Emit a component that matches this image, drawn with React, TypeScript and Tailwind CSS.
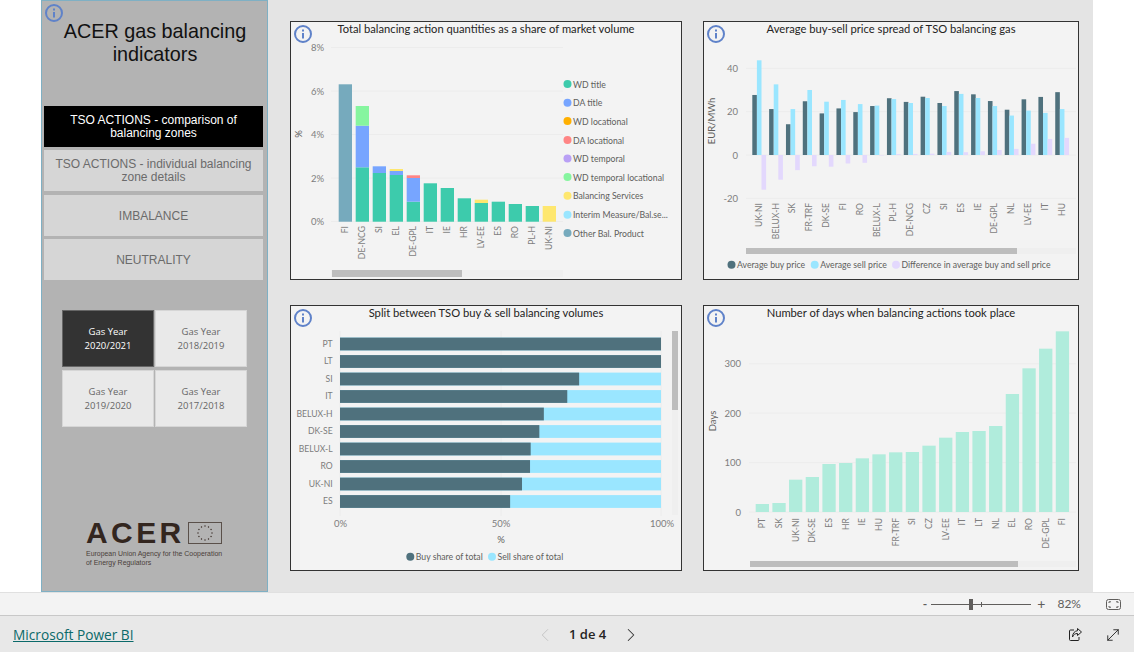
import { ChevronLeft, ChevronRight, MoveDiagonal } from "lucide-react";
import type { ReactNode } from "react";

const TICK = "text-[9.5px] fill-[#7d7d7d]";
const CATEGORY = "text-[8.6px] fill-[#7d7d7d]";
const LEGEND = "text-[8.7px] fill-[#605e5c]";
const GRID = "#ececec";

const BUY = "#4f717d";
const SELL = "#9ae6ff";
const DIFF = "#e3d8fd";

function InfoIcon() {
  return (
    <svg width="20" height="20" viewBox="0 0 20 20" className="block">
      <circle cx="10" cy="10" r="8" fill="none" stroke="#5f82c9" strokeWidth="2" />
      <rect x="9" y="9" width="2" height="5.5" fill="#5f82c9" />
      <rect x="9" y="5.5" width="2" height="2" fill="#5f82c9" />
    </svg>
  );
}

function Card({
  title,
  box,
  children,
}: {
  title: string;
  box: [number, number, number, number];
  children: ReactNode;
}) {
  return (
    <div className="relative flex flex-col border border-[#333] bg-[#f3f3f3]">
      <div className="h-[16px] text-center text-[11.2px] leading-[14px] text-[#252423]">{title}</div>
      <svg
        width={box[2]}
        height={box[3]}
        viewBox={box.join(" ")}
        className="block font-['Lato',sans-serif]"
      >
        {children}
      </svg>
      <div className="absolute left-[2px] top-[2px]">
        <InfoIcon />
      </div>
    </div>
  );
}

function XLabel({ x, y, text }: { x: number; y: number; text: string }) {
  return (
    <text
      x={x}
      y={y}
      transform={`rotate(-90 ${x} ${y})`}
      textAnchor="end"
      dominantBaseline="central"
      className={CATEGORY}
    >
      {text}
    </text>
  );
}

function YTitle({ x, y, text }: { x: number; y: number; text: string }) {
  return (
    <text
      x={x}
      y={y}
      transform={`rotate(-90 ${x} ${y})`}
      textAnchor="middle"
      dominantBaseline="central"
      className="text-[9.5px] fill-[#605e5c]"
    >
      {text}
    </text>
  );
}

function LegendItem({ x, y, color, text }: { x: number; y: number; color: string; text: string }) {
  return (
    <g>
      <circle cx={x} cy={y} r="4" fill={color} />
      <text x={x + 5.5} y={y} dominantBaseline="central" className={LEGEND}>
        {text}
      </text>
    </g>
  );
}

function Tick({ x, y, text, className = TICK }: { x: number; y: number; text: string; className?: string }) {
  return (
    <text x={x} y={y} textAnchor="end" dominantBaseline="central" className={className}>
      {text}
    </text>
  );
}

// stacks are [top y, colour] from the bottom up, read off the picture
const shareBars: [string, [number, string][]][] = [
  ["FI", [[84.3, "#76aabd"]]],
  ["DE-NCG", [[167.3, "#3dcbac"], [125.7, "#77a5ff"], [106, "#86f59f"]]],
  ["SI", [[173, "#3dcbac"], [166.3, "#77a5ff"]]],
  ["EL", [[175, "#3dcbac"], [171, "#77a5ff"], [169, "#fee76f"]]],
  ["DE-GPL", [[201.7, "#3dcbac"], [178, "#77a5ff"], [175.3, "#ff8585"]]],
  ["IT", [[183.3, "#3dcbac"]]],
  ["IE", [[188, "#3dcbac"]]],
  ["HR", [[198.3, "#3dcbac"]]],
  ["LV-EE", [[203, "#3dcbac"], [199.7, "#fee76f"]]],
  ["ES", [[201.7, "#3dcbac"]]],
  ["RO", [[204, "#3dcbac"]]],
  ["PL-H", [[206, "#3dcbac"]]],
  ["UK-NI", [[206, "#fee76f"]]],
];

const shareLegend: [string, string, number][] = [
  ["WD title", "#3dcbac", 84],
  ["DA title", "#77a5ff", 102.7],
  ["WD locational", "#ffb000", 121],
  ["DA locational", "#ff8585", 140],
  ["WD temporal", "#b9a0f5", 158.5],
  ["WD temporal locational", "#86f59f", 177],
  ["Balancing Services", "#fee76f", 195.7],
  ["Interim Measure/Bal.se...", "#9ae6ff", 214.7],
  ["Other Bal. Product", "#76aabd", 233],
];

function ShareChart() {
  return (
    <Card title="Total balancing action quantities as a share of market volume" box={[291, 38, 390, 241]}>
      {[47.5, 91, 134.5, 178, 221.5].map((y, i) => (
        <g key={y}>
          <line x1="331" x2="563" y1={y} y2={y} stroke={GRID} />
          <Tick x={324} y={y} text={`${8 - i * 2}%`} />
        </g>
      ))}
      <YTitle x={298} y={134} text="%" />
      {shareBars.map(([name, stack], i) => {
        const x = 338.7 + i * 17;
        let bottom = 221.7;
        return (
          <g key={name}>
            {stack.map(([top, color]) => {
              const h = bottom - top;
              const y = top;
              bottom = top;
              return <rect key={color} x={x} y={y} width="13.3" height={h} fill={color} />;
            })}
            <XLabel x={x + 6.6} y={226} text={name} />
          </g>
        );
      })}
      {shareLegend.map(([text, color, y]) => (
        <LegendItem key={text} x={567.5} y={y} color={color} text={text} />
      ))}
      <rect x="331" y="270" width="232" height="7" fill="#efefef" />
      <rect x="332" y="270" width="130" height="7" fill="#bdbdbd" />
    </Card>
  );
}

const spread: [string, number, number, number][] = [
  ["UK-NI", 27.7, 43.7, -16],
  ["BELUX-H", 21.2, 32.6, -11.4],
  ["SK", 14.2, 21.2, -7],
  ["FR-TRF", 24.8, 30, -5.2],
  ["DK-SE", 19.2, 24.6, -5.4],
  ["FI", 21.5, 25.4, -3.9],
  ["RO", 19.8, 23.5, -3.6],
  ["BELUX-L", 22.6, 22.8, -0.2],
  ["PL-H", 26.2, 25.8, 0.4],
  ["DE-NCG", 24.5, 24, 0.5],
  ["CZ", 26.9, 26.3, 0.6],
  ["SI", 24, 22.6, 1.4],
  ["ES", 29.5, 28.2, 1.3],
  ["IE", 28, 26.3, 1.7],
  ["DE-GPL", 24.9, 22.6, 2.3],
  ["NL", 20.9, 18.2, 2.8],
  ["LV-EE", 25.7, 20.5, 5.2],
  ["IT", 26.8, 19.4, 7.4],
  ["HU", 29, 21.2, 7.9],
];

function SpreadBar({ x, value, color }: { x: number; value: number; color: string }) {
  const h = Math.abs(value) * 2.167;
  return <rect x={x} y={value > 0 ? 155 - h : 155} width="4.6" height={h} fill={color} />;
}

function SpreadChart() {
  return (
    <Card title="Average buy-sell price spread of TSO balancing gas" box={[704, 38, 374, 241]}>
      {[40, 20, 0, -20].map((v) => (
        <g key={v}>
          <line x1="746" x2="1076" y1={155 - v * 2.167} y2={155 - v * 2.167} stroke={GRID} />
          <Tick x={738} y={155 - v * 2.167} text={String(v)} />
        </g>
      ))}
      <YTitle x={711} y={121} text="EUR/MWh" />
      {spread.map(([name, buy, sell, diff], i) => {
        const x = 752.3 + i * 16.83;
        return (
          <g key={name}>
            <SpreadBar x={x} value={buy} color={BUY} />
            <SpreadBar x={x + 4.6} value={sell} color={SELL} />
            <SpreadBar x={x + 9.2} value={diff} color={DIFF} />
            <XLabel x={x + 6.5} y={203} text={name} />
          </g>
        );
      })}
      <rect x="746" y="248" width="330" height="6" fill="#efefef" />
      <rect x="746" y="248" width="271" height="6" fill="#bdbdbd" />
      <LegendItem x={731.5} y={264.7} color={BUY} text="Average buy price" />
      <LegendItem x={814.7} y={264.7} color={SELL} text="Average sell price" />
      <LegendItem x={896} y={264.7} color={DIFF} text="Difference in average buy and sell price" />
    </Card>
  );
}

const split: [string, number][] = [
  ["PT", 100],
  ["LT", 100],
  ["SI", 74.5],
  ["IT", 70.8],
  ["BELUX-H", 63.5],
  ["DK-SE", 62.1],
  ["BELUX-L", 59.4],
  ["RO", 59.2],
  ["UK-NI", 56.7],
  ["ES", 53],
];

function SplitChart() {
  return (
    <Card title="Split between TSO buy & sell balancing volumes" box={[291, 322, 390, 248]}>
      {[340, 501, 661].map((x) => (
        <line key={x} x1={x} x2={x} y1="331" y2="516" stroke={GRID} />
      ))}
      {split.map(([name, buy], i) => {
        const y = 337.6 + i * 17.5;
        return (
          <g key={name}>
            <rect x="340" y={y} width="321" height="12.8" fill={SELL} />
            <rect x="340" y={y} width={(321 * buy) / 100} height="12.8" fill={BUY} />
            <Tick x={332.7} y={y + 6} text={name} className={CATEGORY} />
          </g>
        );
      })}
      <rect x="672" y="331" width="6" height="184" fill="#efefef" />
      <rect x="672" y="331" width="6" height="79" fill="#bdbdbd" />
      {(
        [
          [340.5, "0%"],
          [501, "50%"],
          [662, "100%"],
        ] as [number, string][]
      ).map(([x, text]) => (
        <text key={text} x={x} y={523.7} textAnchor="middle" dominantBaseline="central" className={TICK}>
          {text}
        </text>
      ))}
      <text x={501} y={539.7} textAnchor="middle" dominantBaseline="central" className="text-[9.5px] fill-[#605e5c]">
        %
      </text>
      <LegendItem x={410.3} y={556.7} color={BUY} text="Buy share of total" />
      <LegendItem x={492} y={556.7} color={SELL} text="Sell share of total" />
    </Card>
  );
}

const days: [string, number][] = [
  ["PT", 24],
  ["SK", 27],
  ["UK-NI", 97],
  ["DK-SE", 105],
  ["ES", 144],
  ["HR", 147],
  ["IE", 161],
  ["HU", 173],
  ["FR-TRF", 179],
  ["SI", 180],
  ["CZ", 199],
  ["LV-EE", 223],
  ["IT", 240],
  ["LT", 243],
  ["NL", 258],
  ["EL", 354],
  ["RO", 431],
  ["DE-GPL", 490],
  ["FI", 542],
];

function DaysChart() {
  return (
    <Card title="Number of days when balancing actions took place" box={[704, 322, 374, 248]}>
      {[300, 200, 100, 0].map((v) => (
        <g key={v}>
          <line x1="749" x2="1076" y1={512 - v * 0.4943} y2={512 - v * 0.4943} stroke={GRID} />
          <Tick x={741} y={512 - v * 0.4943} text={String(v)} />
        </g>
      ))}
      <YTitle x={712.5} y={421} text="Days" />
      {days.map(([name, h], i) => {
        const x = 755.7 + i * 16.67;
        return (
          <g key={name}>
            <rect x={x} y={512 - h / 3} width="13.3" height={h / 3} fill="#b0ecdc" />
            <XLabel x={x + 6.6} y={518} text={name} />
          </g>
        );
      })}
      <rect x="750" y="561" width="326" height="6" fill="#efefef" />
      <rect x="750" y="561" width="268" height="6" fill="#bdbdbd" />
    </Card>
  );
}

function NavButton({ children, active }: { children: ReactNode; active?: boolean }) {
  return (
    <div
      className={`flex h-[41px] items-center justify-center px-2 text-center text-[12px] leading-[13px] ${
        active ? "bg-black text-white" : "bg-[#d6d6d6] text-[#6b6b6b]"
      }`}
    >
      <span>{children}</span>
    </div>
  );
}

function YearTile({ line, active }: { line: string; active?: boolean }) {
  return (
    <div
      className={`flex h-[57px] flex-col items-center justify-center border pt-[1px] text-[9.5px] leading-[14px] font-['Open_Sans',sans-serif] ${
        active ? "border-[#666] bg-[#333] text-white" : "border-[#d6d6d6] bg-[#e9e9e9] text-[#666]"
      }`}
    >
      <span>Gas Year</span>
      <span>{line}</span>
    </div>
  );
}

const stars = Array.from({ length: 12 }, (_, i) => {
  const a = (i * Math.PI) / 6;
  return [205 + Math.sin(a) * 7, 532.5 - Math.cos(a) * 7];
});

function AcerLogo() {
  return (
    <div className="ml-[44px] mt-[95px] w-[140px] text-[#33261f]">
      <div className="flex h-[22px] items-center">
        <span className="w-[102px] text-[30px] font-bold leading-[22px] tracking-[3.4px] font-['Liberation_Sans',sans-serif]">
          ACER
        </span>
        <svg width="34" height="22" viewBox="188 521.5 34 22" className="block">
          <rect x="188.5" y="522" width="33" height="21" fill="none" stroke="#5a504a" />
          {stars.map(([x, y]) => (
            <circle key={`${x}-${y}`} cx={x} cy={y} r="0.7" fill="#33261f" />
          ))}
        </svg>
      </div>
      <div className="mt-[5px] whitespace-nowrap text-[6.95px] leading-[9px] font-['Liberation_Sans',sans-serif] text-[#4a403a]">
        <div>European Union Agency for the Cooperation</div>
        <div>of Energy Regulators</div>
      </div>
    </div>
  );
}

function Sidebar() {
  return (
    <aside className="relative h-full w-[227px] border border-[#7fb0c4] bg-[#b3b3b3] font-['Liberation_Sans',sans-serif]">
      <div className="absolute left-[2px] top-[2px]">
        <InfoIcon />
      </div>
      <h1 className="pt-[19px] pl-[1px] text-center text-[19.8px] font-normal leading-[23px] text-[#111]">
        ACER gas balancing
        <br />
        indicators
      </h1>
      <div className="mt-[40px] ml-[2px] mr-[4px] flex flex-col gap-[3px]">
        <NavButton active>
          TSO ACTIONS - comparison of
          <br />
          balancing zones
        </NavButton>
        <NavButton>
          TSO ACTIONS - individual balancing
          <br />
          zone details
        </NavButton>
        <div className="mt-[1px]">
          <NavButton>
            <span className="relative top-[1px]">IMBALANCE</span>
          </NavButton>
        </div>
        <NavButton>
          <span className="relative top-[1px]">NEUTRALITY</span>
        </NavButton>
      </div>
      <div className="ml-[20px] mt-[30px] grid w-[185px] grid-cols-2 gap-x-[1px] gap-y-[3px]">
        <YearTile line="2020/2021" active />
        <YearTile line="2018/2019" />
        <YearTile line="2019/2020" />
        <YearTile line="2017/2018" />
      </div>
      <AcerLogo />
    </aside>
  );
}

function ZoomBar() {
  return (
    <div className="flex h-[24px] items-center justify-end border-y border-y-[#e0e0e0] border-b-[#c8c8c8] bg-[#f3f3f3] text-[#605e5c]">
      <span className="mr-[4px] text-[12px] font-bold leading-none">-</span>
      <div className="relative mr-[6px] h-[1px] w-[100px] bg-[#605e5c]">
        <div className="absolute left-[38px] top-[-5px] h-[11px] w-[4px] bg-[#605e5c]" />
        <div className="absolute left-[50px] top-[-2px] h-[5px] w-[1px] bg-[#605e5c]" />
      </div>
      <span className="mr-[12px] text-[14px] leading-none">+</span>
      <span className="mr-[25px] text-[12px]">82%</span>
      <svg width="15" height="11" viewBox="0 0 15 11" fill="none" stroke="#605e5c" className="mr-[13px] block">
        <rect x="0.5" y="0.5" width="14" height="10" rx="2" />
        <path d="M3 4V2.8H5M10 2.8h2V4M12 7v1.2h-2M5 8.2H3V7" />
      </svg>
    </div>
  );
}

function BottomBar() {
  return (
    <div className="flex h-[36px] items-center bg-[#e8e8e8] pt-[1px] font-['Open_Sans',sans-serif]">
      <a className="ml-[13px] mt-[2px] w-[120px] whitespace-nowrap text-[13.7px] text-[#0b6a6a] underline">
        Microsoft Power BI
      </a>
      <ChevronLeft size={22} strokeWidth={0.9} className="ml-[401px] text-[#bdbdbd]" />
      <span className="ml-[13px] w-[38px] whitespace-nowrap text-[13px] font-semibold text-[#252423]">1 de 4</span>
      <ChevronRight size={22} strokeWidth={1.1} className="ml-[13px] text-[#333]" />
      <svg width="15" height="15" viewBox="0 0 15 15" fill="none" stroke="#222" className="ml-[426px] block">
        <path d="M6 3H2.5A1 1 0 0 0 1.5 4v8.5a1 1 0 0 0 1 1H10a1 1 0 0 0 1-1V10" />
        <path d="M9.5 1.5 13.5 5 9.5 8.5V6.5C7 6.5 5.5 7.5 4.5 10 4.5 6.5 6.5 4 9.5 3.7Z" />
      </svg>
      <MoveDiagonal size={18} strokeWidth={1.2} className="ml-[21px] text-[#222]" />
    </div>
  );
}

export default function App() {
  return (
    <div className="flex h-[652px] w-[1134px] flex-col overflow-hidden bg-white font-['Lato',sans-serif]">
      <div className="flex h-[592px] pl-[41px] pr-[41px]">
        <div className="flex h-full w-full bg-[#e4e4e4]">
          <Sidebar />
          <main className="grid grid-cols-[392px_376px] grid-rows-[259px_266px] gap-x-[21px] gap-y-[25px] pl-[22px] pt-[21px]">
            <ShareChart />
            <SpreadChart />
            <SplitChart />
            <DaysChart />
          </main>
        </div>
      </div>
      <ZoomBar />
      <BottomBar />
    </div>
  );
}
